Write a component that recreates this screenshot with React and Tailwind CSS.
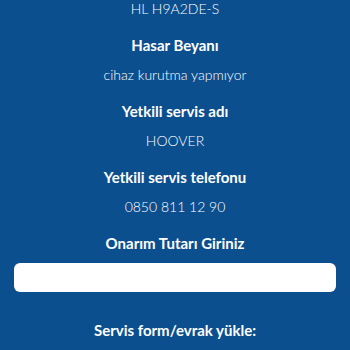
import React from 'react';

const Field = ({ label, value }) => (
  <>
    <div className="mt-4 text-[15px] leading-5 font-bold text-white">{label}</div>
    <div className="mt-[10px] text-[14px] leading-5 font-light text-white">{value}</div>
  </>
);

const App = () => {
  return (
    <div
      className="min-h-screen bg-[#0c4f8f] flex flex-col items-center text-center"
      style={{ fontFamily: 'Lato, sans-serif' }}
    >
      <div className="mt-[-1px] text-[14px] leading-5 font-light text-white">HL H9A2DE-S</div>
      <Field label="Hasar Beyanı" value="cihaz kurutma yapmıyor" />
      <Field label="Yetkili servis adı" value="HOOVER" />
      <Field label="Yetkili servis telefonu" value="0850 811 12 90" />
      <div className="mt-4 text-[15px] leading-5 font-bold text-white">Onarım Tutarı Giriniz</div>
      <input
        type="text"
        className="mt-[10px] w-[322px] h-[29px] rounded-md bg-white outline-none"
      />
      <div className="mt-[28px] text-[15px] leading-5 font-bold text-white">Servis form/evrak yükle:</div>
    </div>
  );
};

export default App;
